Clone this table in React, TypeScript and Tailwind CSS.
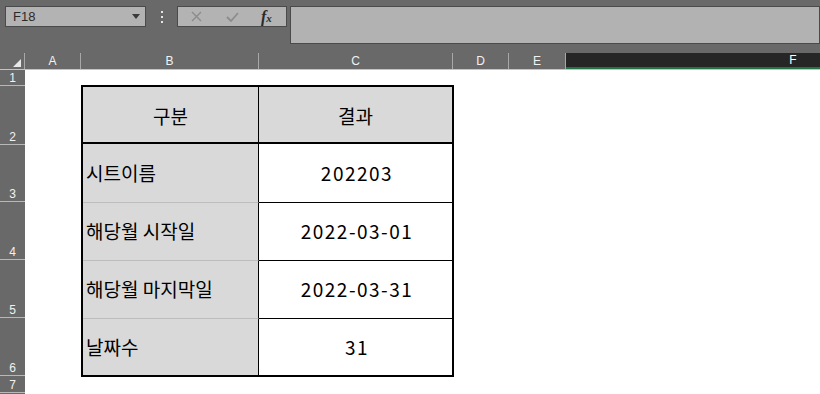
import React from "react";

const font = { fontFamily: '"Noto Sans CJK KR", "Noto Sans", sans-serif' };

const columns = [
  { key: "A", w: "w-[56px]" },
  { key: "B", w: "w-[178px]" },
  { key: "C", w: "w-[194px]" },
  { key: "D", w: "w-[56px]" },
  { key: "E", w: "w-[57px]" },
];

// 행 머리글 (8행은 아래쪽에 살짝만 보임)
const rowHeads = [
  { n: "1", h: "h-[16px]" },
  { n: "2", h: "h-[59px]" },
  { n: "3", h: "h-[57px]" },
  { n: "4", h: "h-[58px]" },
  { n: "5", h: "h-[58px]" },
  { n: "6", h: "h-[58px]" },
  { n: "7", h: "h-[17px]" },
  { n: "", h: "h-[17px]" },
];

const rows = [
  { label: "시트이름", value: "202203", h: "h-[58px]", first: true },
  { label: "해당월 시작일", value: "2022-03-01", h: "h-[58px]" },
  { label: "해당월 마지막일", value: "2022-03-31", h: "h-[58px]" },
  { label: "날짜수", value: "31", h: "h-[57px]" },
];

const Toolbar = () => (
  <div className="flex h-[53px] shrink-0 items-start pt-[6px]">
    {/* 이름 상자 */}
    <div className="ml-[5px] flex h-[21px] w-[141px] items-center justify-between border border-[#4a4a4a] bg-[#b3b3b3] pl-[7px] pr-[5px]">
      <span className="text-[13px] text-[#2b2b2b] font-['Liberation_Sans',sans-serif]">F18</span>
      <svg width="8" height="5" viewBox="0 0 8 5">
        <path d="M0 0h8L4 5z" fill="#3a3a3a" />
      </svg>
    </div>

    <div className="ml-[14px] mr-[14px] flex h-[21px] w-[3px] flex-col items-center justify-center gap-[3px]">
      <span className="block h-[2px] w-[2px] bg-[#e6e6e6]" />
      <span className="block h-[2px] w-[2px] bg-[#e6e6e6]" />
      <span className="block h-[2px] w-[2px] bg-[#e6e6e6]" />
    </div>

    {/* 취소 / 입력 / 함수 */}
    <div className="flex h-[21px] w-[110px] items-center border border-[#4a4a4a] bg-[#b3b3b3]">
      <svg className="ml-[13px]" width="11" height="11" viewBox="0 0 11 11">
        <path d="M1 1l9 9M10 1l-9 9" stroke="#8c8c8c" strokeWidth="1.4" />
      </svg>
      <svg className="ml-[24px]" width="13" height="10" viewBox="0 0 13 10">
        <path d="M1 5l4 4 7-8" stroke="#8c8c8c" strokeWidth="1.8" fill="none" />
      </svg>
      <span className="ml-[22px] text-[16px] italic font-bold text-[#2a2a2a] font-['Liberation_Serif',serif] leading-none">
        f<span className="text-[11px]">x</span>
      </span>
    </div>

    {/* 수식 입력줄 */}
    <div className="ml-[3px] h-[38px] flex-1 border border-[#4a4a4a] bg-[#b2b2b2]" />
  </div>
);

const ColumnHeader = () => (
  <div className="flex h-[17px] shrink-0 border-b border-[#c4c4c4] font-['Liberation_Sans',sans-serif] text-[12px] text-[#f2f2f2]">
    <div className="relative w-[25px] shrink-0 border-r border-[#a8a8a8]">
      <svg className="absolute bottom-[2px] right-[3px]" width="8" height="8" viewBox="0 0 8 8">
        <path d="M8 0v8H0z" fill="#e8e8e8" />
      </svg>
    </div>
    {columns.map((c) => (
      <div
        key={c.key}
        className={`${c.w} shrink-0 border-r border-[#a8a8a8] flex items-center justify-center`}
      >
        {c.key}
      </div>
    ))}
    <div className="flex w-[454px] shrink-0 items-center justify-center border-b-2 border-[#217346] bg-[#262626] text-white">
      F
    </div>
  </div>
);

const Table = () => (
  <div className="ml-[56px] mt-[15px] flex w-[373px] flex-col border-2 border-black text-[19px] text-black" style={font}>
    <div className="flex h-[57px] border-b-2 border-black bg-[#d9d9d9]">
      <div className="flex w-[176px] items-center justify-center border-r border-black pt-[3px]">구분</div>
      <div className="flex flex-1 items-center justify-center pt-[3px]">결과</div>
    </div>
    {rows.map((r) => (
      <div key={r.label} className={`flex ${r.h}`}>
        <div
          className={`flex w-[176px] items-center border-r border-black bg-[#d9d9d9] pl-[3px] ${
            r.first ? "" : "border-t border-t-[#bdbdbd]"
          }`}
        >
          {r.label}
        </div>
        <div
          className={`flex flex-1 items-center justify-center bg-white pl-[3px] tracking-[1.5px] ${
            r.first ? "" : "border-t border-black"
          }`}
        >
          {r.value}
        </div>
      </div>
    ))}
  </div>
);

export default function App() {
  return (
    <div className="flex h-[394px] w-[820px] flex-col overflow-hidden bg-[#696969]">
      <Toolbar />
      <ColumnHeader />
      <div className="flex flex-1">
        <div className="flex w-[25px] shrink-0 flex-col font-['Liberation_Sans',sans-serif] text-[12px] text-[#f2f2f2]">
          {rowHeads.map((r, i) => (
            <div
              key={i}
              className={`${r.h} shrink-0 border-b border-[#b8b8b8] flex items-end justify-center pb-[1px] leading-none`}
            >
              {r.n}
            </div>
          ))}
        </div>
        <div className="flex-1 bg-white">
          <Table />
        </div>
      </div>
    </div>
  );
}
